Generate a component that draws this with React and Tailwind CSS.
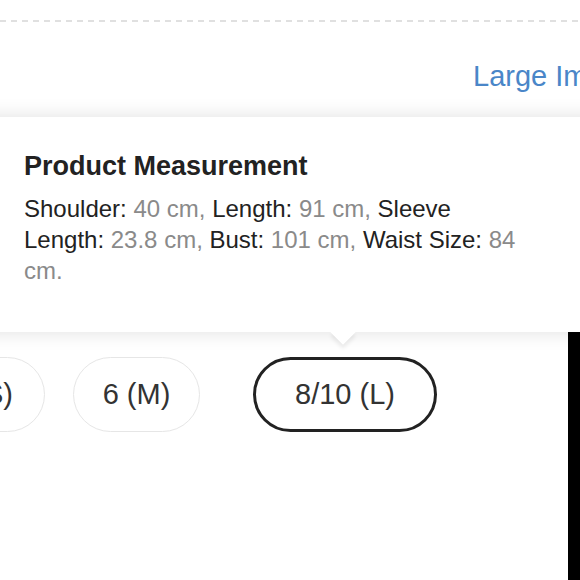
import React from "react";

const sizes = [
  { label: "4 (S)", selected: false, width: "w-[127px]" },
  { label: "6 (M)", selected: false, width: "w-[127px]" },
  { label: "8/10 (L)", selected: true, width: "w-[184px]" },
];

const measurements = [
  { name: "Shoulder", value: "40 cm" },
  { name: "Length", value: "91 cm" },
  { name: "Sleeve Length", value: "23.8 cm" },
  { name: "Bust", value: "101 cm" },
  { name: "Waist Size", value: "84 cm" },
];

const App = () => {
  return (
    <div className="w-[580px] h-[580px] overflow-hidden bg-white flex flex-col font-['Liberation_Sans',Arial,sans-serif]">
      <div className="h-[20px] shrink-0" />
      <div className="h-[2px] shrink-0 bg-[image:repeating-linear-gradient(to_right,#e0e0e0_0_6px,transparent_6px_11px)]" />

      <div className="h-[95px] shrink-0 pl-[473px] pt-[38px] whitespace-nowrap">
        <span className="text-[29px] leading-[33px] text-[#4a86c8]">Large Image</span>
      </div>

      <div className="relative z-10 h-[215px] shrink-0 -mx-[20px] bg-white pl-[44px] pt-[34px] shadow-[0_0_18px_rgba(0,0,0,0.13)]">
        <h2 className="text-[27px] leading-[30px] font-bold text-[#222]">Product Measurement</h2>
        <p className="mt-[12px] w-[500px] text-[24px] leading-[31px]">
          {measurements.map((m, i) => (
            <React.Fragment key={m.name}>
              <span className="text-[#222]">{m.name}: </span>
              <span className="text-[#8a8a8a]">
                {m.value}
                {i < measurements.length - 1 ? "," : "."}
              </span>{" "}
            </React.Fragment>
          ))}
        </p>
        <div className="absolute left-[354px] bottom-[-9px] w-[18px] h-[18px] rotate-45 bg-white shadow-[3px_3px_4px_rgba(0,0,0,0.07)]" />
      </div>

      <div className="flex flex-1">
        <div className="flex-1 flex items-start pt-[25px]">
          <div className="flex gap-[28px] -ml-[82px]">
            {sizes.map((s) => (
              <div
                key={s.label}
                className={`${s.width} h-[75px] shrink-0 rounded-full flex items-center justify-center text-[29px] text-[#333] ${
                  s.selected ? "border-[3px] border-[#222] ml-[25px]" : "border-[1.5px] border-[#e6e6e6]"
                }`}
              >
                {s.label}
              </div>
            ))}
          </div>
        </div>
        <div className="w-[12px] bg-black" />
      </div>
    </div>
  );
};

export default App;
